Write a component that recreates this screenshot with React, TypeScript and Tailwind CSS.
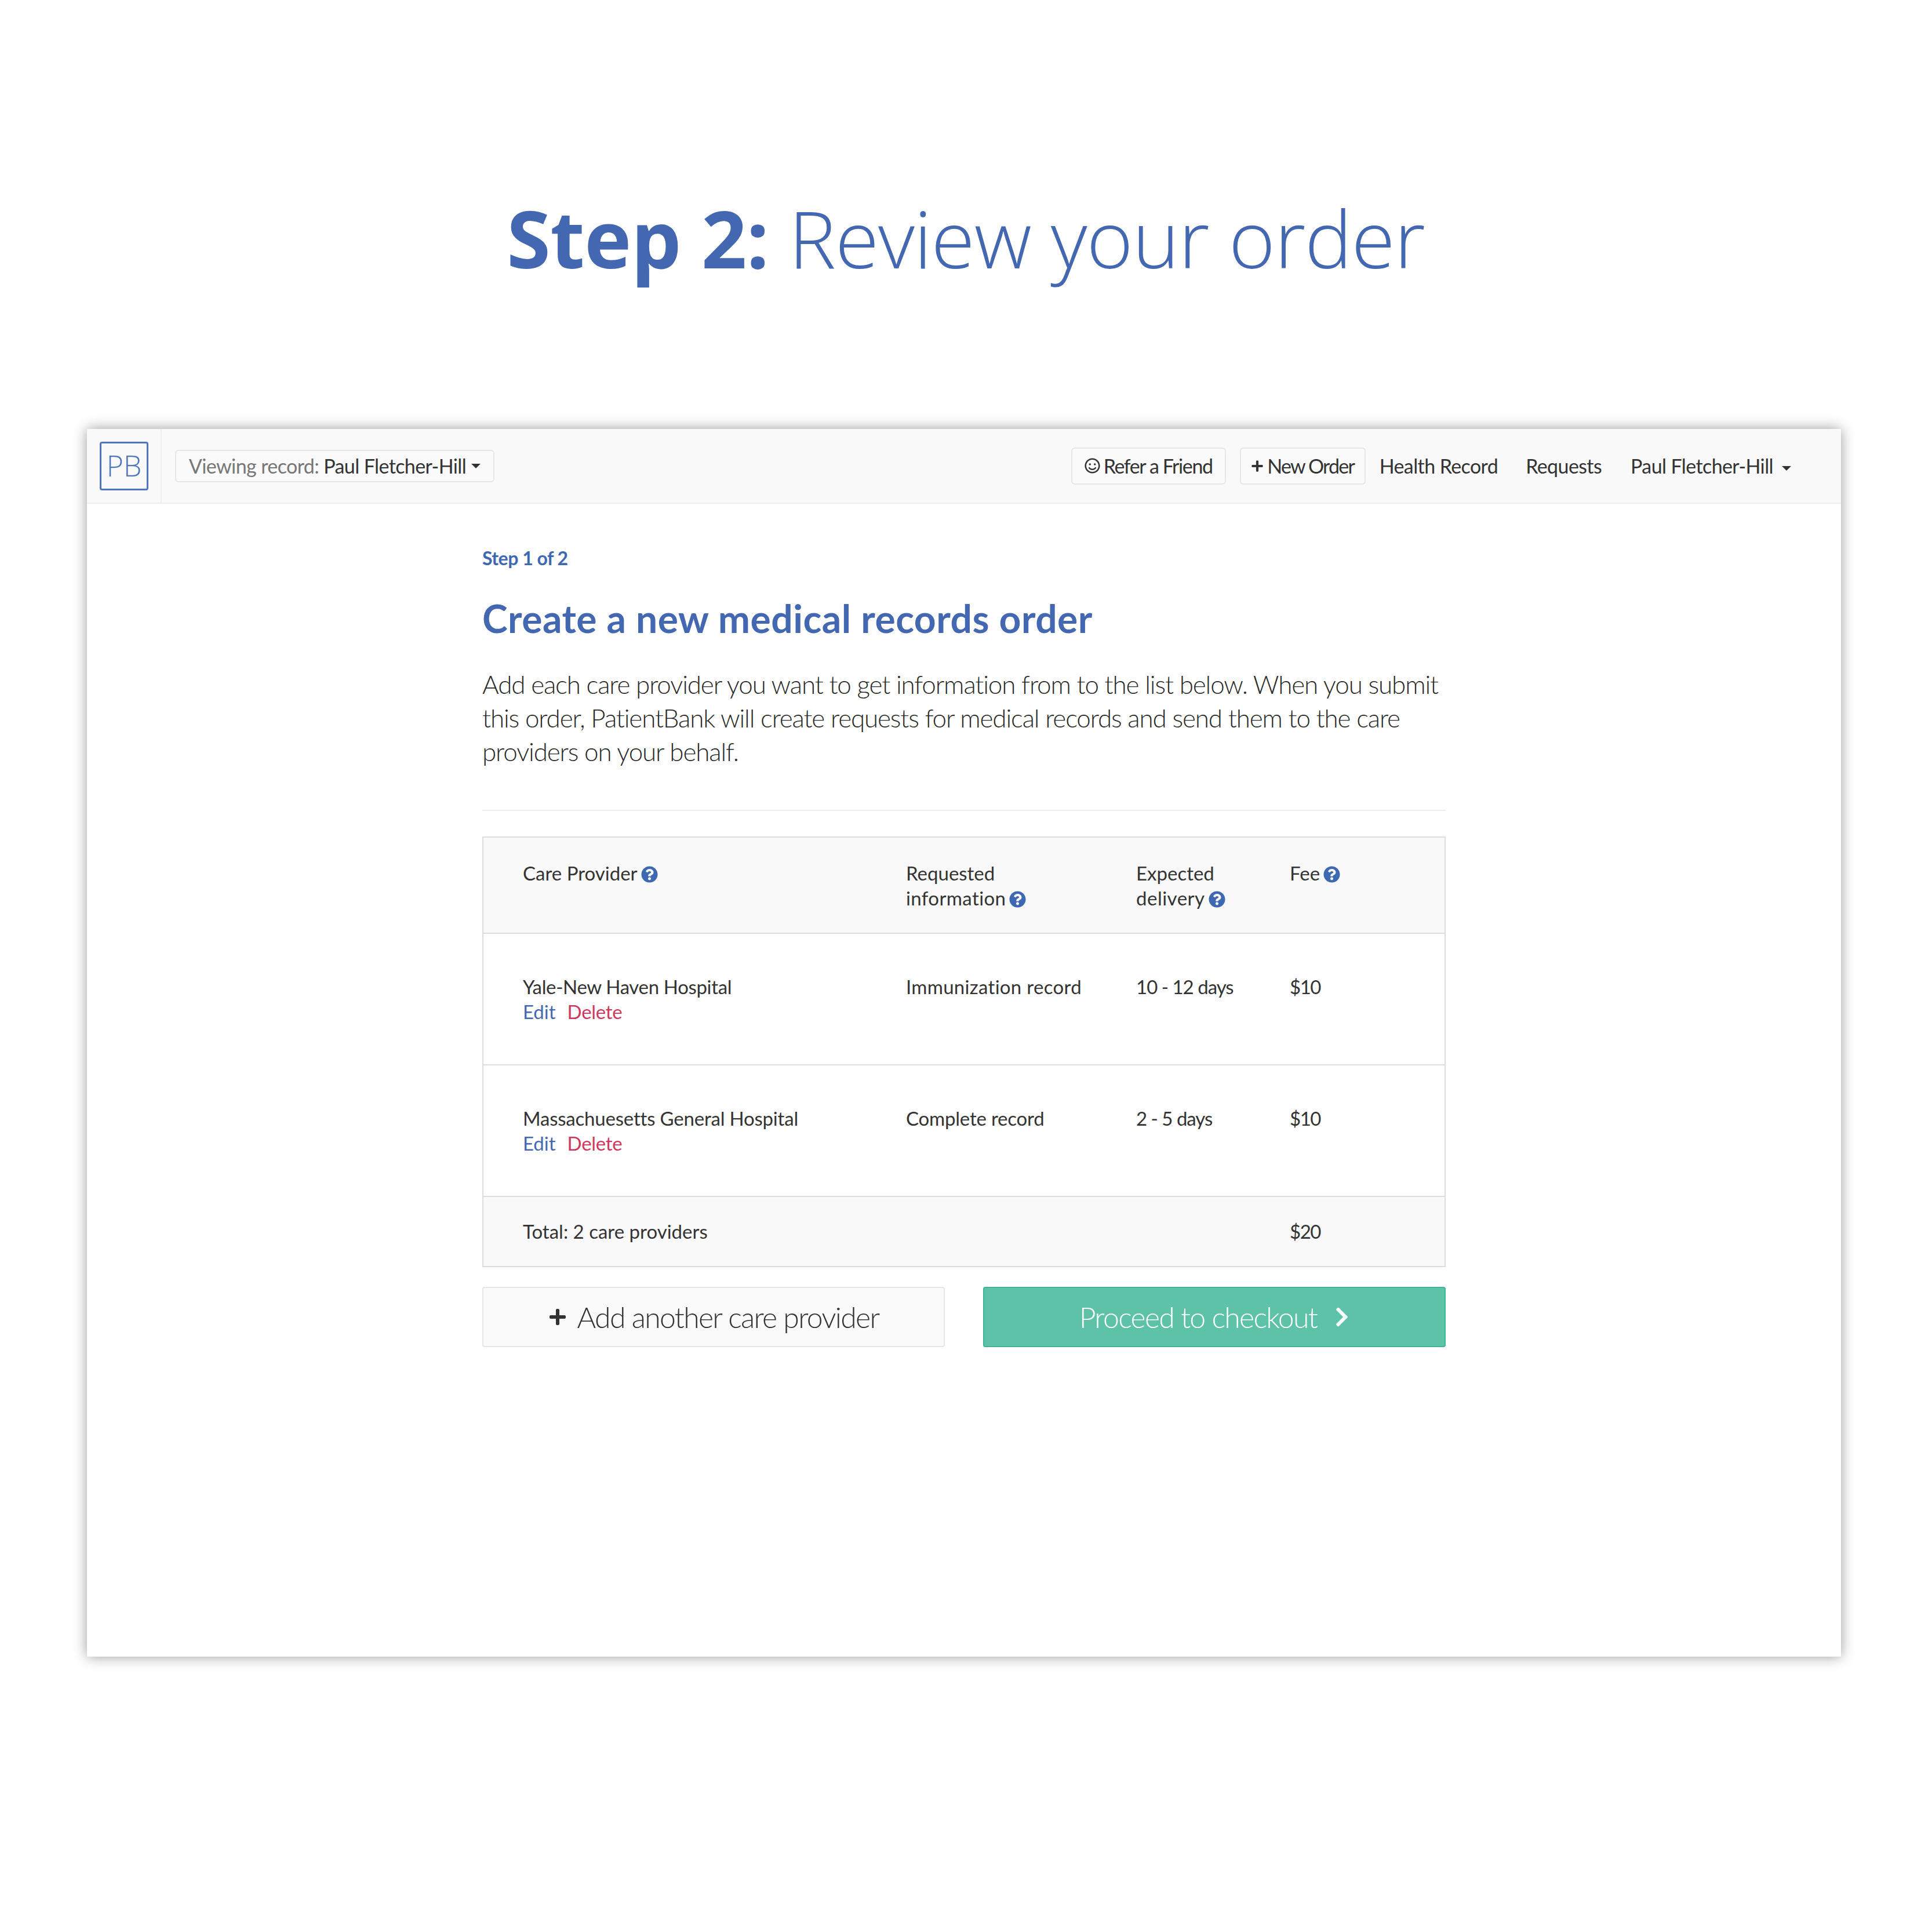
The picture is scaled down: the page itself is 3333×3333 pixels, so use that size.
import React from 'react';
import { FaChevronRight, FaPlus, FaQuestionCircle, FaRegSmile } from 'react-icons/fa';

const Help = () => <FaQuestionCircle className="inline-block w-[29px] h-[29px] ml-[6px] align-[-4px] text-[#3f68b3]" />;

const Caret = ({ gap = 'ml-[9px]' }: { gap?: string }) => (
  <span className={`inline-block ${gap} align-middle border-x-[8px] border-t-[8px] border-x-transparent border-t-[#333]`} />
);

const rowGrid = 'grid grid-cols-[661px_397px_265px_1fr] pl-[68px]';

const providers = [
  { name: 'Yale-New Haven Hospital', nameClass: 'tracking-[-0.35px]', info: 'Immunization record', infoClass: 'tracking-[0.3px]', delivery: '10 - 12 days', fee: '$10' },
  { name: 'Massachuesetts General Hospital', nameClass: 'tracking-[-0.2px]', info: 'Complete record', infoClass: 'tracking-[-0.2px]', delivery: '2 - 5 days', fee: '$10' },
];

export default function App() {
  return (
    <div className="w-[3333px] h-[3333px] bg-white pl-[150px] font-['Lato',sans-serif] text-[#333]">
      <div className="h-[740px] w-[3026px] flex items-center justify-center pt-[80px] pl-[6px]">
        <h1 className="text-[137px] leading-none whitespace-nowrap text-[#4367b0] font-['Open_Sans',sans-serif] font-light tracking-[-1.2px]">
          <span className="font-bold tracking-[-0.5px]">Step 2:</span> Review your order
        </h1>
      </div>

      <div className="w-[3026px] h-[2118px] bg-white shadow-[0_0_22px_rgba(0,0,0,0.4)]">
        <div className="h-[129px] flex items-center bg-[#f9f9f9] border-b-2 border-[#eeeeee] text-[34px] tracking-[-0.6px]">
          <div className="h-full w-[129px] pl-[22px] flex items-center border-r-2 border-[#eeeeee] shrink-0">
            <div className="w-[84px] h-[84px] border-[3px] border-[#4f76bd] rounded-[4px] flex items-center justify-center text-[50px] font-['Open_Sans',sans-serif] font-light text-[#4f76bd] tracking-normal">
              PB
            </div>
          </div>
          <div className="ml-[23px] h-[56px] w-[551px] flex items-center justify-center bg-[#fafafa] border-2 border-[#e6e6e6] rounded-[6px] whitespace-nowrap">
            <span className="text-[#777]">Viewing record:&nbsp;</span>Paul Fletcher-Hill<Caret />
          </div>
          <div className="ml-auto flex items-center whitespace-nowrap">
            <div className="w-[267px] h-[64px] flex items-center justify-center gap-[6px] border-2 border-[#e6e6e6] rounded-[6px] bg-[#fafafa] tracking-[-1.4px]">
              <FaRegSmile className="w-[27px] h-[27px]" />Refer a Friend
            </div>
            <div className="ml-[24px] w-[217px] h-[64px] flex items-center justify-center gap-[6px] border-2 border-[#e6e6e6] rounded-[6px] bg-[#fafafa] tracking-[-1.8px]">
              <FaPlus className="w-[22px] h-[22px]" />New Order
            </div>
            <span className="ml-[24px]">Health Record</span>
            <span className="ml-[48px]">Requests</span>
            <span className="ml-[50px] mr-[86px]">Paul Fletcher-Hill<Caret gap="ml-[15px]" /></span>
          </div>
        </div>

        <div className="w-[1662px] ml-[682px] pt-[72px]">
          <p className="text-[32px] leading-[44px] font-bold text-[#3f68b3] tracking-[-0.5px]">Step 1 of 2</p>
          <h2 className="mt-[42px] text-[66px] leading-[80px] font-bold text-[#4367b0] tracking-[0.5px]">Create a new medical records order</h2>
          <p className="mt-[44px] text-[44px] leading-[58px] font-light text-[#2a2a2a] tracking-[-1.15px]">
            Add each care provider you want to get information from to the list below. When you submit this order, PatientBank will create requests for medical records and send them to the care providers on your behalf.
          </p>
          <div className="mt-[72px] border-t-2 border-[#eeeeee]" />

          <div className="mt-[44px] border-2 border-[#dddddd] text-[33px] leading-[43px]">
            <div className={`${rowGrid} h-[166px] pt-[40px] bg-[#f9f9f9] border-b-2 border-[#dddddd]`}>
              <div>Care Provider<Help /></div>
              <div>Requested<br /><span className="tracking-[0.4px]">information</span><Help /></div>
              <div>Expected<br /><span className="tracking-[0.5px]">delivery</span><Help /></div>
              <div>Fee<Help /></div>
            </div>
            {providers.map((p) => (
              <div key={p.name} className={`${rowGrid} h-[227px] pt-[70px] border-b-2 border-[#dddddd]`}>
                <div>
                  <span className={p.nameClass}>{p.name}</span>
                  <div>
                    <span className="text-[#4367b0]">Edit</span>
                    <span className="ml-[20px] text-[#d0375c] tracking-[-0.3px]">Delete</span>
                  </div>
                </div>
                <div className={p.infoClass}>{p.info}</div>
                <div className="tracking-[-1px]">{p.delivery}</div>
                <div className="tracking-[-1.5px]">{p.fee}</div>
              </div>
            ))}
            <div className={`${rowGrid} h-[119px] items-center bg-[#f9f9f9]`}>
              <div className="col-span-3">Total: 2 care providers</div>
              <div className="tracking-[-1.5px]">$20</div>
            </div>
          </div>

          <div className="mt-[34px] flex justify-between text-[50px] font-light tracking-[-1.7px]">
            <div className="w-[798px] h-[104px] flex items-center justify-center gap-[18px] bg-[#fafafa] border-2 border-[#e6e6e6] rounded-[4px]">
              <FaPlus className="w-[32px] h-[32px]" />Add another care provider
            </div>
            <div className="w-[798px] h-[104px] flex items-center justify-center gap-[30px] bg-[#5ec2a8] border-2 border-[#3fb394] rounded-[4px] text-white">
              Proceed to checkout<FaChevronRight className="w-[26px] h-[38px]" />
            </div>
          </div>
        </div>
      </div>
    </div>
  );
}
